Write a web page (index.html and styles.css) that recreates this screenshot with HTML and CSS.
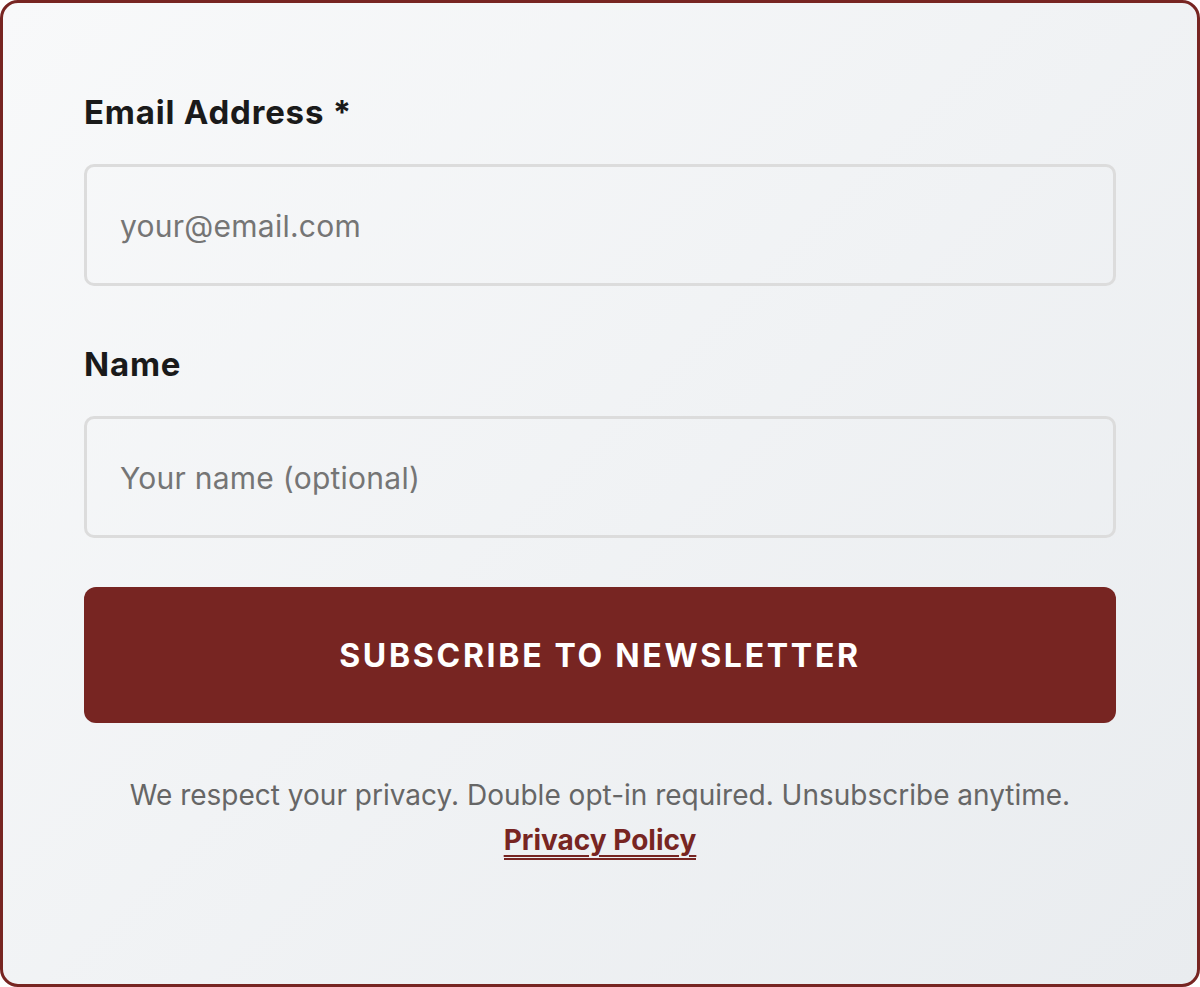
FILE: index.html
```html
<!DOCTYPE html>
<html lang="en">
<head>
<meta charset="utf-8">
<title>Newsletter</title>
<link rel="stylesheet" href="styles.css">
</head>
<body>
<form class="card">
  <div class="field">
    <label class="label" for="email">Email Address *</label>
    <input class="input" id="email" type="email" placeholder="your@email.com">
  </div>
  <div class="field">
    <label class="label" for="name">Name</label>
    <input class="input" id="name" type="text" placeholder="Your name (optional)">
  </div>
  <button class="btn" type="button">Subscribe to Newsletter</button>
  <p class="note">We respect your privacy. Double opt-in required. Unsubscribe anytime.<br><a class="link" href="#">Privacy Policy</a></p>
</form>
</body>
</html>
```
FILE: styles.css
```css
html, body {
  margin: 0;
  padding: 0;
  background: #ffffff;
}
body {
  font-family: Inter, "Noto Sans", sans-serif;
}
.card {
  box-sizing: border-box;
  width: 1200px;
  height: 987px;
  border: 3px solid #772522;
  border-radius: 18px;
  background: linear-gradient(135deg, #f8f9fa 0%, #e9ecef 100%);
  padding: 89px 81px 0;
  display: flex;
  flex-direction: column;
}
.field {
  display: flex;
  flex-direction: column;
  gap: 32px;
  margin-bottom: 58px;
}
.field:nth-child(2) {
  margin-bottom: 49px;
}
.label {
  font-size: 33px;
  font-weight: 700;
  letter-spacing: 0.8px;
  color: #1a1a1a;
  line-height: normal;
}
.input {
  box-sizing: border-box;
  width: 100%;
  height: 122px;
  border: 3px solid #dcdcdc;
  border-radius: 10px;
  background: transparent;
  padding: 2px 33px 0;
  font-family: Inter, "Noto Sans", sans-serif;
  font-size: 30px;
  letter-spacing: 0.25px;
  color: #333;
  outline: none;
}
.input::placeholder {
  color: #757575;
}
.btn {
  box-sizing: border-box;
  width: 100%;
  height: 136px;
  border: none;
  border-radius: 12px;
  background: #772522;
  color: #ffffff;
  font-family: Inter, "Noto Sans", sans-serif;
  font-size: 32px;
  font-weight: 700;
  letter-spacing: 2.7px;
  text-transform: uppercase;
  cursor: pointer;
}
.note {
  margin: 50px 0 0;
  text-align: center;
  font-size: 28px;
  line-height: 1.6;
  color: #666666;
}
.link {
  color: #772522;
  font-weight: 700;
  text-decoration: underline;
  text-decoration-thickness: 2px;
  text-underline-offset: 5px;
  border-bottom: 2px solid #772522;
  padding-bottom: 1px;
}
```
